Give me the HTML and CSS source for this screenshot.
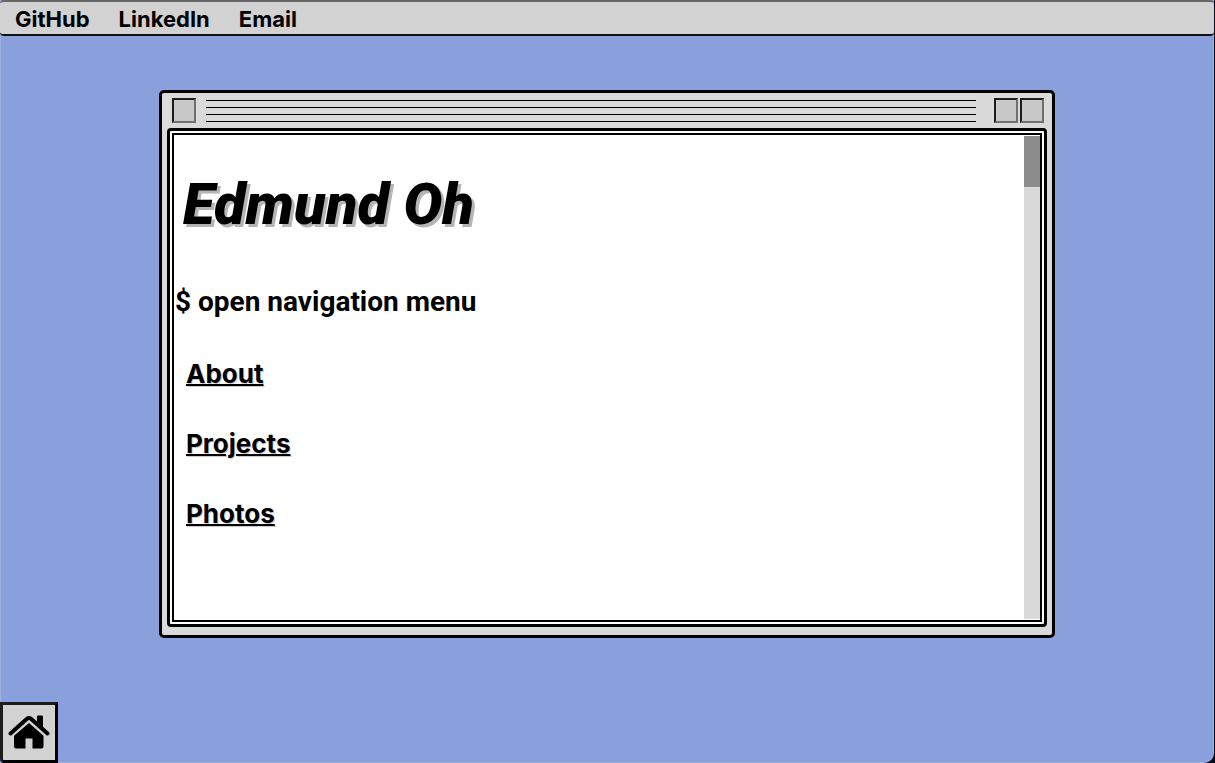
FILE: index.html
```html
<!DOCTYPE html>
<html lang="en">
<head>
<meta charset="utf-8">
<meta name="viewport" content="width=device-width, initial-scale=1">
<title>Edmund Oh</title>
<link rel="stylesheet" href="styles.css">
</head>
<body>
<div class="desktop">
  <nav class="menubar" aria-label="Contact">
    <a href="#github">GitHub</a>
    <a href="#linkedin">LinkedIn</a>
    <a href="#email">Email</a>
  </nav>
  <main class="workspace">
    <section class="window">
      <header class="titlebar">
        <button class="control" type="button" aria-label="Close"></button>
        <div class="stripes"><span></span><span></span><span></span><span></span></div>
        <div class="control-pair">
          <button class="control" type="button" aria-label="Minimize"></button>
          <button class="control" type="button" aria-label="Zoom"></button>
        </div>
      </header>
      <div class="frame">
        <div class="pane">
          <div class="content">
            <h1>Edmund Oh</h1>
            <p class="prompt">$ open navigation menu</p>
            <ul class="links">
              <li><a href="#about">About</a></li>
              <li><a href="#projects">Projects</a></li>
              <li><a href="#photos">Photos</a></li>
            </ul>
          </div>
          <div class="scrollbar"><div class="thumb"></div></div>
        </div>
      </div>
    </section>
  </main>
  <footer class="dock">
    <button class="home" type="button" aria-label="Home">
      <svg viewBox="0 0 42 34" width="42" height="34" aria-hidden="true">
        <path d="M2.500 18.500 L19 3.800 Q21 2.200 23 3.800 L39.500 18.500" fill="none" stroke="#000" stroke-width="4" stroke-linecap="round" stroke-linejoin="round"/>
        <path d="M29 1.500 Q29 .5 30 .5 H34 Q35 .5 35 1.500 V13 L29 7.500Z"/>
        <path d="M21 8 L35.500 20.800 V31.500 Q35.500 33.500 33.500 33.500 H24.500 V23.500 H17.500 V33.500 H8 Q6 33.500 6 31.500 V20.800Z"/>
      </svg>
    </button>
  </footer>
</div>
</body>
</html>
```
FILE: styles.css
```css
* {
  box-sizing: border-box;
}

body {
  margin: 0;
  background: #080b12;
  color: #000;
  font-family: Roboto, "Liberation Sans", sans-serif;
  font-weight: 700;
}

.desktop {
  display: flex;
  flex-direction: column;
  min-height: 100vh;
  margin-right: 1px;
  background: #8aa0dd;
  border-left: 1px solid #9fb0df;
  border-right: 1px solid #9fb0df;
  border-bottom: 1px solid #9fb0df;
  border-bottom-right-radius: 10px;
}

.menubar {
  display: flex;
  align-items: center;
  gap: 29px;
  height: 36px;
  margin: 0 -1px;
  padding: 2px 15px 0;
  background: #d2d2d2;
  border-top: 2px solid #666;
  border-bottom: 2px solid #111;
  border-radius: 4px;
  font-family: Inter, Roboto, sans-serif;
  font-size: 22px;
  line-height: 30px;
}

.menubar a {
  color: inherit;
  text-decoration: none;
}

.workspace {
  flex: 1;
  padding: 54px 24px 0;
}

.window {
  max-width: 896px;
  margin: 0 auto;
  padding: 0 5px 8px;
  background: #dadada;
  border: 3px solid #000;
  border-radius: 5px;
}

.titlebar {
  display: flex;
  align-items: center;
  height: 35px;
  padding: 0 3px 0 5px;
}

.control {
  width: 24px;
  height: 25px;
  padding: 0;
  background: #c8c8c8;
  border: 2px solid;
  border-color: #1c1c1c #707070 #707070 #1c1c1c;
}

.stripes {
  flex: 1;
  display: flex;
  flex-direction: column;
  gap: 6px;
  margin: 0 18px 0 10px;
}

.stripes span {
  height: 1px;
  background: #000;
}

.control-pair {
  display: flex;
  gap: 2px;
}

.frame {
  padding: 2px;
  background: #fff;
  border: 3px solid #000;
  border-radius: 4px;
}

.pane {
  display: flex;
  min-height: 489px;
  border: 2px solid #000;
}

.content {
  flex: 1;
  padding: 31px 0 0 1px;
}

h1 {
  margin: 0 0 0 8px;
  font-size: 58px;
  font-weight: 900;
  font-style: italic;
  line-height: 76px;
  text-shadow: 3px 3px 0 #b4b4b4;
}

.prompt {
  margin: 42px 0 0;
  font-size: 28px;
  line-height: 36px;
}

.links {
  display: flex;
  flex-direction: column;
  gap: 34px;
  margin: 36px 0 0;
  padding: 0 0 0 11px;
  list-style: none;
  font-family: Inter, Roboto, sans-serif;
  font-size: 26px;
  line-height: 36px;
}

.links a {
  color: inherit;
  text-decoration-thickness: 2px;
  text-shadow: 1px 1px 0 #ccc;
}

.scrollbar {
  width: 16px;
  margin: 1px 0;
  background: #dadada;
}

.thumb {
  height: 51px;
  background: #8d8d8d;
}

.dock {
  display: flex;
}

.home {
  display: flex;
  align-items: center;
  justify-content: center;
  width: 58px;
  height: 61px;
  margin: 0 0 -1px -1px;
  padding: 0 0 2px;
  background: #d2d2d2;
  border: 3px solid;
  border-color: #1c1c1c #000 #000 #1c1c1c;
  border-bottom-left-radius: 4px;
}
```
